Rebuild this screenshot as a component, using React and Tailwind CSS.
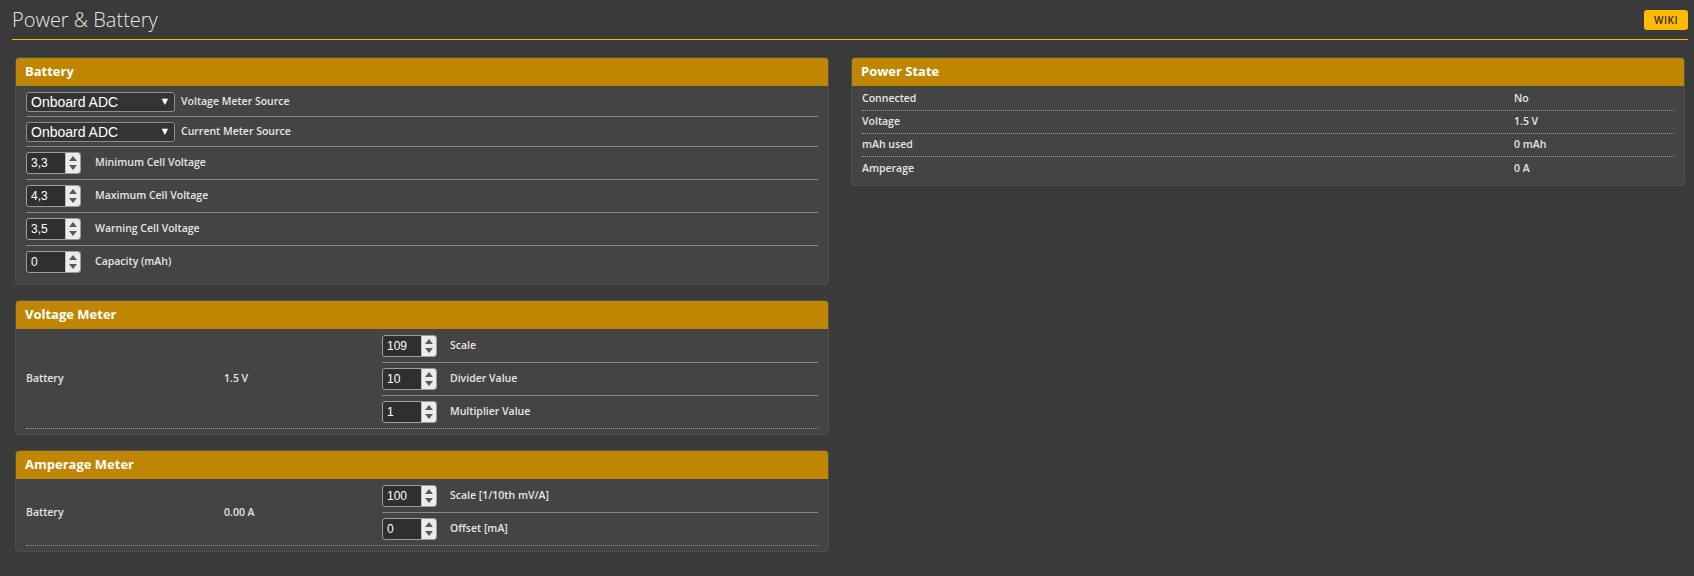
import React from "react";

function Spin() {
  return (
    <div className="flex w-[15px] flex-col items-center justify-center gap-[4px] border-l border-[#bdbdbd] bg-[#ececec]">
      <svg width="8" height="5" viewBox="0 0 8 5"><path d="M0 5 L4 0 L8 5Z" fill="#5a5a5a" /></svg>
      <svg width="8" height="5" viewBox="0 0 8 5"><path d="M0 0 L4 5 L8 0Z" fill="#5a5a5a" /></svg>
    </div>
  );
}

function NumInput({ value }) {
  return (
    <div className="flex h-[22px] w-[55px] shrink-0 overflow-hidden rounded-[3px] border border-[#9d9d9d] bg-[#2f2f2f]">
      <div className="flex flex-1 items-center pl-[4px] font-['Liberation_Sans',sans-serif] text-[12px] text-white">{value}</div>
      <Spin />
    </div>
  );
}

function Select() {
  return (
    <div className="flex h-[20px] w-[149px] shrink-0 items-center justify-between rounded-[3px] border border-[#8d8d8d] bg-[#333333] pl-[4px] pr-[6px]">
      <span className="font-['Liberation_Sans',sans-serif] text-[14px] leading-none text-white">Onboard ADC</span>
      <span className="font-['DejaVu_Sans',sans-serif] text-[8px] leading-none text-white">▼</span>
    </div>
  );
}

function Panel({ title, className = "", children }) {
  return (
    <div className={"overflow-hidden rounded-[4px] border border-[#4e4f4e] bg-[#434443] " + className}>
      <div className="flex h-[28px] items-center bg-[#bf8603] pl-[9px] text-[13px] font-bold text-white">{title}</div>
      {children}
    </div>
  );
}

const label = "text-[10.5px] font-semibold text-[#e6e6e6]";

function MeterPanel({ title, value, rows }) {
  return (
    <Panel title={title}>
      <div className="px-[10px] pb-[5px] pt-[1px]">
        <div className="flex items-center border-b border-dotted border-[#9a9a9a]">
          <div className={"w-[198px] " + label}>Battery</div>
          <div className={"w-[158px] " + label}>{value}</div>
          <div className="flex flex-1 flex-col">
            {rows.map((r, i) => (
              <div
                key={r[1]}
                className={
                  "flex items-center py-[5px] " + (i < rows.length - 1 ? "border-b border-[#8a8a8a]" : "")
                }
              >
                <NumInput value={r[0]} />
                <span className={"ml-[13px] " + label}>{r[1]}</span>
              </div>
            ))}
          </div>
        </div>
      </div>
    </Panel>
  );
}

export default function App() {
  const stateRows = [
    ["Connected", "No"],
    ["Voltage", "1.5 V"],
    ["mAh used", "0 mAh"],
    ["Amperage", "0 A"],
  ];
  const numRows = [
    ["3,3", "Minimum Cell Voltage"],
    ["4,3", "Maximum Cell Voltage"],
    ["3,5", "Warning Cell Voltage"],
    ["0", "Capacity (mAh)"],
  ];
  return (
    <div className="min-h-[576px] w-full bg-[#393a39] pl-[12px] pr-[6px] font-['Open_Sans',sans-serif]">
      <div className="flex items-center justify-between border-b border-[#ffbb00] pb-[6px] pt-[7px]">
        <h1 className="text-[20px] font-light leading-[26px] text-[#e8e8e8]">Power &amp; Battery</h1>
        <div className="flex h-[20px] w-[44px] items-center justify-center rounded-[3px] bg-[#ffbb00] text-[10px] font-semibold tracking-[0.5px] text-[#2a2a2a]">
          WIKI
        </div>
      </div>

      <div className="mt-[17px] flex gap-[22px] px-[3px]">
        <div className="flex w-[814px] flex-col gap-[15px]">
          <Panel title="Battery">
            <div className="px-[10px] pb-[6px] pt-[1px]">
              <div className="flex items-center gap-[6px] border-b border-[#8a8a8a] pb-[4px] pt-[5px]">
                <Select />
                <span className={label}>Voltage Meter Source</span>
              </div>
              <div className="flex items-center gap-[6px] border-b border-[#8a8a8a] pb-[4px] pt-[5px]">
                <Select />
                <span className={label}>Current Meter Source</span>
              </div>
              {numRows.map((r, i) => (
                <div
                  key={r[1]}
                  className={"flex items-center py-[5px] " + (i < numRows.length - 1 ? "border-b border-[#8a8a8a]" : "")}
                >
                  <NumInput value={r[0]} />
                  <span className={"ml-[14px] " + label}>{r[1]}</span>
                </div>
              ))}
            </div>
          </Panel>

          <MeterPanel
            title="Voltage Meter"
            value="1.5 V"
            rows={[
              ["109", "Scale"],
              ["10", "Divider Value"],
              ["1", "Multiplier Value"],
            ]}
          />

          <MeterPanel
            title="Amperage Meter"
            value="0.00 A"
            rows={[
              ["100", "Scale [1/10th mV/A]"],
              ["0", "Offset [mA]"],
            ]}
          />
        </div>

        <div className="flex-1 self-start">
          <Panel title="Power State">
            <div className="px-[10px] pb-[5px] pt-[2px]">
              {stateRows.map((r, i) => (
                <div
                  key={r[0]}
                  className={
                    "flex h-[23px] items-center " + (i < stateRows.length - 1 ? "border-b border-dotted border-[#9a9a9a]" : "")
                  }
                >
                  <div className={"w-[652px] " + label}>{r[0]}</div>
                  <div className={label}>{r[1]}</div>
                </div>
              ))}
            </div>
          </Panel>
        </div>
      </div>
    </div>
  );
}
